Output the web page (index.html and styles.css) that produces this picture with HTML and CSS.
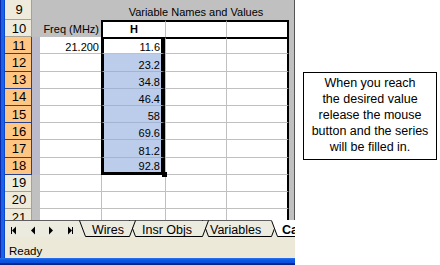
FILE: index.html
```html
<!DOCTYPE html>
<html>
<head>
<meta charset="utf-8">
<link rel="stylesheet" href="styles.css">
</head>
<body>
<div class="page">
  <div class="excel">
    <div class="frame-left"></div>
    <div class="sheet">
      <!-- row 9 -->
      <div class="rh">9</div>
      <div class="g span-l"></div>
      <div class="g title">Variable Names and Values</div>
      <div class="g"></div>
      <!-- row 10 -->
      <div class="rh">10</div>
      <div class="g"></div>
      <div class="g num fqh">Freq (MHz)</div>
      <div class="hdr h10">H</div>
      <div class="hdr c10"></div>
      <div class="hdr c10 d10"></div>
      <div class="g"></div>
      <!-- row 11 -->
      <div class="rh sel">11</div>
      <div class="nl sel"></div>
      <div class="c fq num">21.200</div>
      <div class="c hs top num">11.6</div>
      <div class="c cc top"></div>
      <div class="c cc dd top"></div>
      <div class="g"></div>
      <!-- row 12 -->
      <div class="rh sel">12</div>
      <div class="nl sel"></div>
      <div class="c fq"></div>
      <div class="c hs blue num">23.2</div>
      <div class="c cc"></div>
      <div class="c cc dd"></div>
      <div class="g"></div>
      <!-- row 13 -->
      <div class="rh sel">13</div>
      <div class="nl sel"></div>
      <div class="c fq"></div>
      <div class="c hs blue num">34.8</div>
      <div class="c cc"></div>
      <div class="c cc dd"></div>
      <div class="g"></div>
      <!-- row 14 -->
      <div class="rh sel">14</div>
      <div class="nl sel"></div>
      <div class="c fq"></div>
      <div class="c hs blue num">46.4</div>
      <div class="c cc"></div>
      <div class="c cc dd"></div>
      <div class="g"></div>
      <!-- row 15 -->
      <div class="rh sel">15</div>
      <div class="nl sel"></div>
      <div class="c fq"></div>
      <div class="c hs blue num">58</div>
      <div class="c cc"></div>
      <div class="c cc dd"></div>
      <div class="g"></div>
      <!-- row 16 -->
      <div class="rh sel">16</div>
      <div class="nl sel"></div>
      <div class="c fq"></div>
      <div class="c hs blue num">69.6</div>
      <div class="c cc"></div>
      <div class="c cc dd"></div>
      <div class="g"></div>
      <!-- row 17 -->
      <div class="rh sel">17</div>
      <div class="nl sel"></div>
      <div class="c fq"></div>
      <div class="c hs blue num">81.2</div>
      <div class="c cc"></div>
      <div class="c cc dd"></div>
      <div class="g"></div>
      <!-- row 18 -->
      <div class="rh sel">18</div>
      <div class="nl sel"></div>
      <div class="c fq"></div>
      <div class="c hs blue last num">92.8<span class="handle"></span></div>
      <div class="c cc"></div>
      <div class="c cc dd"></div>
      <div class="g"></div>
      <!-- row 19 -->
      <div class="rh">19</div>
      <div class="nl"></div>
      <div class="c fq"></div>
      <div class="c cc"></div>
      <div class="c cc"></div>
      <div class="c cc dd"></div>
      <div class="g"></div>
      <!-- row 20 -->
      <div class="rh">20</div>
      <div class="nl"></div>
      <div class="c fq"></div>
      <div class="c cc"></div>
      <div class="c cc"></div>
      <div class="c cc dd"></div>
      <div class="g"></div>
      <!-- row 21 -->
      <div class="rh">21</div>
      <div class="nl"></div>
      <div class="c fq"></div>
      <div class="c cc"></div>
      <div class="c cc"></div>
      <div class="c cc dd"></div>
      <div class="g"></div>
    </div>
    <div class="tabbar">
      <svg class="tabs" width="290" height="17" viewBox="0 0 290 17">
        <line x1="0" y1="0.5" x2="290" y2="0.5" stroke="#5f5f5f"/>
        <rect x="6" y="7" width="1" height="7" fill="#000"/>
        <polygon points="7,10.5 11,6.5 11,14.5" fill="#000"/>
        <polygon points="26,10.5 30,6.5 30,14.5" fill="#000"/>
        <polygon points="48,10.5 44,6.5 44,14.5" fill="#000"/>
        <polygon points="67,10.5 63,6.5 63,14.5" fill="#000"/>
        <rect x="67" y="7" width="1" height="7" fill="#000"/>

        <polygon points="197,1 203,16.5 266,16.5 272,1" fill="#ecebe0"/>
        <polyline points="197.5,0.5 203.5,16.5 266.5,16.5 272.5,0.5" fill="none" stroke="#000"/>
        <text class="tt" x="205" y="13.5">Variables</text>

        <polygon points="124,1 130,16.5 197,16.5 203,1" fill="#ecebe0"/>
        <polyline points="124.5,0.5 130.5,16.5 197.5,16.5 203.5,0.5" fill="none" stroke="#000"/>
        <text class="tt" x="137" y="13.5">Insr Objs</text>

        <polygon points="74,1 80,16.5 124,16.5 130,1" fill="#ecebe0"/>
        <polyline points="74.5,0.5 80.5,16.5 124.5,16.5 130.5,0.5" fill="none" stroke="#000"/>
        <text class="tt" x="87" y="13.5">Wires</text>

        <polygon points="266,0 272,16.5 330,16.5 336,0" fill="#ffffff"/>
        <polyline points="266.5,0.5 272.5,16.5 330.5,16.5" fill="none" stroke="#000"/>
        <text class="tt act" x="277" y="13.5">Ca</text>
      </svg>
    </div>
    <div class="status">Ready</div>
    <div class="frame-bottom"></div>
  </div>
  <div class="side">
    <div class="note">When you reach<br>the desired value<br>release the mouse<br>button and the series<br>will be filled in.</div>
  </div>
</div>
</body>
</html>
```
FILE: styles.css
```css
* { box-sizing: border-box; }
html, body { margin: 0; padding: 0; background: #fff; }
body {
  font-family: "Liberation Sans", Arial, sans-serif;
  color: #000;
  width: 440px;
  height: 265px;
  overflow: hidden;
}
.page {
  display: flex;
  width: 440px;
  height: 265px;
}
.excel {
  display: grid;
  grid-template-columns: 5px 290px;
  grid-template-rows: 220px 17px 21px 7px;
  width: 295px;
  height: 265px;
  flex: none;
}
.frame-left {
  grid-column: 1;
  grid-row: 1 / 4;
  background: linear-gradient(to right, #0a2aa8 0, #0a2aa8 1px, #1662e8 1px, #1b64ea 4px, #0b46d0 4px);
}
.frame-bottom {
  grid-column: 1 / 3;
  grid-row: 4;
  background: linear-gradient(to bottom, #2b74ee 0, #0b58e4 2px, #0a4fdc 5px, #082c9c 5px, #06237e 7px);
}
.sheet {
  grid-column: 2;
  grid-row: 1;
  display: grid;
  grid-template-columns: 27px 8px 61px 64px 61px 63px 5px;
  grid-template-rows: 20px repeat(12, 17.2px);
  height: 220px;
  overflow: hidden;
  background: #c0c0c0;
  border-right: 1px solid #555;
  font-size: 11px;
}
.rh {
  background: #eeebdc;
  border-right: 1px solid #a5a294;
  border-bottom: 1px solid #a5a294;
  font-size: 13px;
  display: flex;
  align-items: center;
  justify-content: center;
  padding-left: 2px;
}
.rh.sel {
  background: #ffc583;
  border-right-color: #26408f;
  border-bottom-color: #26408f;
}
.g { background: #c0c0c0; }
.nl { background: #c0c0c0; }
.nl.sel { background: #babacb; }
.span-l { grid-column: 2 / 4; }
.title {
  grid-column: 4 / 7;
  display: flex;
  justify-content: center;
  align-items: flex-end;
  line-height: 11px;
  padding-bottom: 2px;
  padding-left: 2px;
}
.num {
  display: flex;
  justify-content: flex-end;
  align-items: flex-end;
  line-height: 11px;
  padding-right: 1px;
}
.fqh { padding-right: 2px; padding-bottom: 2px; }
.hdr {
  background: #fff;
  border-top: 2px solid #000;
}
.h10 {
  border-left: 2px solid #000;
  font-weight: bold;
  display: flex;
  justify-content: center;
  align-items: flex-end;
  line-height: 11px;
  padding-bottom: 2px;
}
.c10 { border-left: 1px solid #c0c0c0; }
.d10 { border-right: 2px solid #000; }
.c {
  background: #fff;
  border-bottom: 1px solid #c0c0c0;
}
.fq { padding-right: 2px; }
.cc { border-left: 1px solid #c0c0c0; }
.dd { border-right: 2px solid #000; }
.top { border-top: 2px solid #000; }
.hs {
  border-left: 3px solid #000;
  border-right: 4px solid #000;
}
.blue {
  background: #bbcdea;
  border-bottom-color: #a3b4d2;
}
.last {
  position: relative;
  border-bottom: 3px solid #000;
}
.handle {
  position: absolute;
  right: -6px;
  bottom: -5px;
  width: 5px;
  height: 5px;
  background: #000;
}
.tabbar {
  grid-column: 2;
  grid-row: 2;
  background: #ecebe0;
}
.tabs { display: block; }
.tt {
  font-family: "Liberation Sans", Arial, sans-serif;
  font-size: 12.5px;
  fill: #000;
}
.tt.act { font-weight: bold; }
.status {
  grid-column: 2;
  grid-row: 3;
  background: #ece9d8;
  font-size: 11.5px;
  display: flex;
  align-items: center;
  padding-left: 4px;
  padding-top: 6px;
}
.side {
  flex: 1;
  padding-top: 72px;
  padding-left: 8px;
}
.note {
  width: 134px;
  height: 88px;
  border: 1px solid #000;
  text-align: center;
  font-size: 12.5px;
  line-height: 16px;
  padding-top: 2px;
}
```
